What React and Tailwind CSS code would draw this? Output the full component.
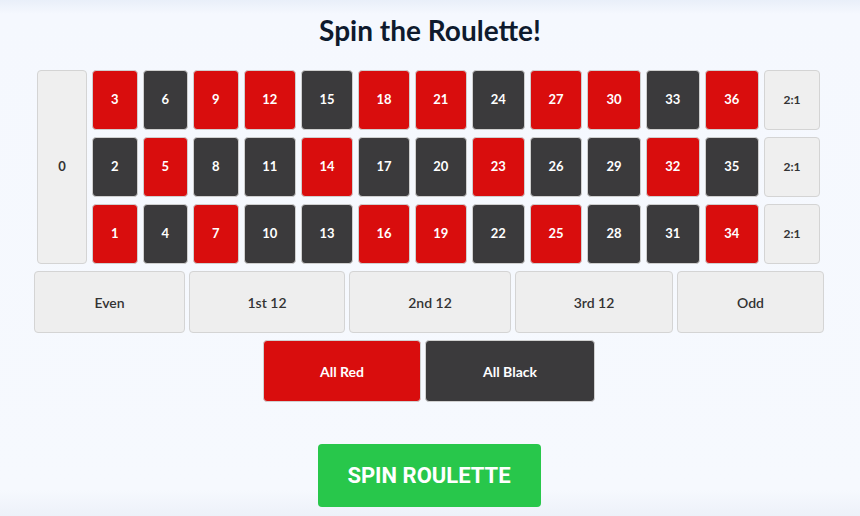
import React from "react";

const RED = new Set([1,3,5,7,9,12,14,16,18,19,21,23,25,27,30,32,34,36]);
const colWidths = ["w-[45.5px]","w-[45.5px]","w-[45.5px]","w-[52.5px]","w-[52px]","w-[52px]","w-[51.5px]","w-[53.5px]","w-[52px]","w-[54px]","w-[53.5px]","w-[54.5px]"];

function Cell({ n, w }) {
  const red = RED.has(n);
  return (
    <div
      className={`${w} h-[60px] shrink-0 rounded-[4px] border border-[#cfcfcf] flex items-center justify-center text-[13px] font-bold text-white ${red ? "bg-[#d90d0d]" : "bg-[#3b3a3c]"}`}
    >
      {n}
    </div>
  );
}

export default function App() {
  const rows = [3, 2, 1];
  return (
    <div
      className="w-[860px] h-[516px] overflow-hidden bg-[linear-gradient(to_bottom,#e9eff9_0px,#f5f8fe_14px,#f6f9fe_490px,#edf1f9_516px)] flex flex-col items-center"
      style={{ fontFamily: "Lato, 'Open Sans', sans-serif" }}
    >
      <h1 className="mt-[12px] h-[36px] text-[28px] leading-[36px] font-bold text-[#0e1a2d]">
        Spin the Roulette!
      </h1>

      <div className="mt-[22px] flex gap-x-[5px] mr-[3px]">
        <div className="w-[50px] h-[194px] rounded-[4px] border border-[#d4d4d4] bg-[#efefef] flex items-center justify-center text-[13px] font-bold text-[#333]">
          0
        </div>
        <div className="flex flex-col gap-y-[7px]">
          {rows.map((r) => (
            <div key={r} className="flex gap-x-[5px]">
              {colWidths.map((w, i) => (
                <Cell key={i} n={i * 3 + r} w={w} />
              ))}
              <div className="w-[56px] h-[60px] rounded-[4px] border border-[#d4d4d4] bg-[#efefef] flex items-center justify-center text-[12px] font-bold text-[#333]">
                2:1
              </div>
            </div>
          ))}
        </div>
      </div>

      <div className="mt-[7px] flex gap-x-[4px] mr-[2px] text-[14px] font-semibold text-[#333]">
        {[
          ["Even", "w-[151px]"],
          ["1st 12", "w-[156px]"],
          ["2nd 12", "w-[162px]"],
          ["3rd 12", "w-[158px]"],
          ["Odd", "w-[147px]"],
        ].map(([t, w]) => (
          <div key={t} className={`${w} h-[62px] rounded-[4px] border border-[#d4d4d4] bg-[#eeeeee] flex items-center justify-center`}>
            {t}
          </div>
        ))}
      </div>

      <div className="mt-[7px] flex gap-x-[4px] mr-[2px] text-[14px] font-bold text-white">
        <div className="w-[158px] h-[62px] rounded-[4px] bg-[#d90d0d] border border-[#d0d0d0] flex items-center justify-center">
          All Red
        </div>
        <div className="w-[170px] h-[62px] rounded-[4px] bg-[#3b3a3c] border border-[#d0d0d0] flex items-center justify-center">
          All Black
        </div>
      </div>

      <button
        className="mt-[42px] w-[223px] h-[63px] rounded-[4px] bg-[#28c74b] text-white text-[22px] font-bold flex items-center justify-center mr-[2px]"
        style={{ fontFamily: "Roboto, sans-serif" }}
      >
        SPIN ROULETTE
      </button>
    </div>
  );
}
